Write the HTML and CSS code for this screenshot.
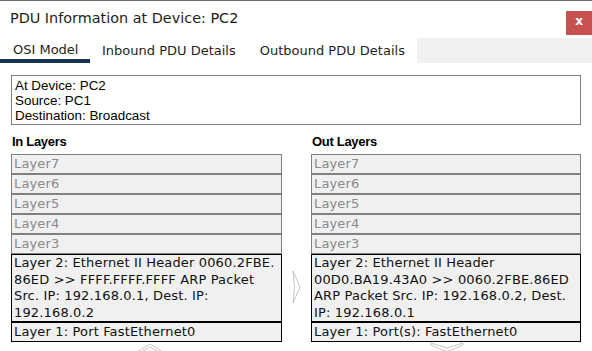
FILE: index.html
```html
<!DOCTYPE html>
<html lang="en">
<head>
    <meta charset="UTF-8">
    <title>PDU Information at Device: PC2</title>
    <link rel="stylesheet" href="styles.css">
</head>
<body>
    <div class="window">
        <div class="titlebar">
            <span class="title">PDU Information at Device: PC2</span>
            <button class="close" type="button">x</button>
        </div>

        <div class="tabs">
            <div class="tab active">OSI Model</div>
            <div class="tab">Inbound PDU Details</div>
            <div class="tab">Outbound PDU Details</div>
            <div class="tab-fill"></div>
        </div>

        <div class="info">
            At Device: PC2<br>
            Source: PC1<br>
            Destination: Broadcast
        </div>

        <div class="columns">
            <div class="column">
                <h3>In Layers</h3>
                <div class="layer">Layer7</div>
                <div class="layer">Layer6</div>
                <div class="layer">Layer5</div>
                <div class="layer">Layer4</div>
                <div class="layer">Layer3</div>
                <div class="layer on">Layer 2: Ethernet II Header 0060.2FBE.<br>86ED &gt;&gt; FFFF.FFFF.FFFF ARP Packet<br>Src. IP: 192.168.0.1, Dest. IP:<br>192.168.0.2</div>
                <div class="layer on">Layer 1: Port FastEthernet0</div>
                <svg class="chev chev-up" width="28" height="12" viewBox="0 0 28 12">
                    <polygon points="1,10 14,2 27,10 27,12 14,5 1,12" />
                </svg>
            </div>

            <div class="mid">
                <svg class="chev chev-right" width="10" height="34" viewBox="0 0 10 34">
                    <polygon points="1,1 8,17 1,33 2.5,17" />
                </svg>
            </div>

            <div class="column">
                <h3>Out Layers</h3>
                <div class="layer">Layer7</div>
                <div class="layer">Layer6</div>
                <div class="layer">Layer5</div>
                <div class="layer">Layer4</div>
                <div class="layer">Layer3</div>
                <div class="layer on">Layer 2: Ethernet II Header<br>00D0.BA19.43A0 &gt;&gt; 0060.2FBE.86ED<br>ARP Packet Src. IP: 192.168.0.2, Dest.<br>IP: 192.168.0.1</div>
                <div class="layer on">Layer 1: Port(s): FastEthernet0</div>
                <svg class="chev chev-down" width="34" height="12" viewBox="0 0 34 12">
                    <polygon points="1,1 17,6 33,1 33,3 17,10 1,3" />
                </svg>
            </div>
        </div>
    </div>
</body>
</html>
```

FILE: styles.css
```css
body {
    margin: 0;
    background: #fff;
    font-family: 'DejaVu Sans', sans-serif;
    overflow: hidden;
}

.window {
    border-top: 1px solid #6e6e6e;
    height: 350px;
}

.titlebar {
    display: flex;
    align-items: center;
    justify-content: space-between;
    height: 37px;
}

.title {
    padding-left: 10px;
    font-size: 14.4px;
    color: #1e1e1e;
    padding-bottom: 4px;
}

.close {
    width: 26px;
    height: 24px;
    margin-top: 6px;
    border: none;
    background: #c75050;
    color: #fff;
    font-family: 'DejaVu Sans', sans-serif;
    font-weight: bold;
    font-size: 12px;
    padding: 0 0 3px;
}

.tabs {
    display: flex;
    height: 25px;
}

.tab {
    padding: 0 12px;
    font-size: 13px;
    line-height: 25px;
    color: #1e1e1e;
    white-space: nowrap;
}

.tab.active {
    width: 65px;
    padding-left: 13px;
    border-bottom: 4px solid #1b3153;
    line-height: 23px;
    height: 21px;
}

.tab-fill {
    flex: 1;
    background: #f0f0f0;
}

.info {
    margin: 12px 11px 0 11px;
    height: 46px;
    border: 1px solid #808080;
    padding: 2px 3px 0;
    font-family: 'Liberation Sans', Arial, sans-serif;
    font-size: 13.4px;
    line-height: 15px;
    color: #000;
}

.columns {
    display: grid;
    grid-template-columns: 271px 29px 270px;
    padding-left: 11px;
}

.column {
    display: flex;
    flex-direction: column;
}

h3 {
    margin: 9px 0 5px 1px;
    height: 15px;
    font-family: 'Liberation Sans', Arial, sans-serif;
    font-size: 13px;
    font-weight: bold;
    letter-spacing: -0.3px;
    color: #000;
}

.layer {
    border: 1px solid #808080;
    background: #f0f0f0;
    height: 18px;
    padding: 0 2px;
    font-size: 13px;
    letter-spacing: 0.15px;
    line-height: 18px;
    color: #8a8a8a;
    white-space: nowrap;
}

.layer.on {
    border-color: #000;
    color: #111;
    height: auto;
    min-height: 18px;
    line-height: 16.5px;
}

.layer.on:last-of-type {
    line-height: 18px;
}

.mid {
    display: flex;
    justify-content: center;
    padding-top: 145px;
}

.chev polyline,
.chev polygon {
    fill: none;
    stroke: #c4c4c4;
    stroke-width: 1;
}

.chev-up {
    align-self: flex-start;
    margin: 0 0 0 125px;
}

.chev-down {
    align-self: flex-start;
    margin: 0 0 0 119px;
}
```
